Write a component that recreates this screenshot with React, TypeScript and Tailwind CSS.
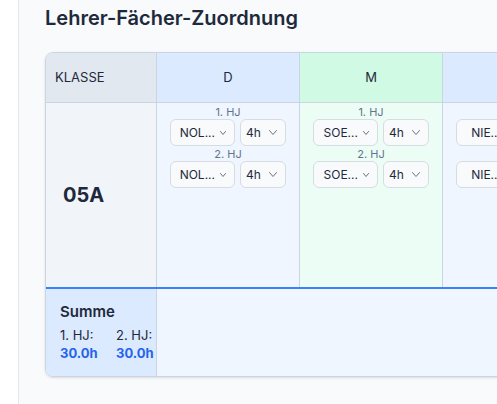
import React from "react";

function Chevron({ size }: { size: "sm" | "md" }) {
  const w = size === "sm" ? 6 : 8;
  const h = size === "sm" ? 4 : 5;
  return (
    <svg width={w} height={h} viewBox={`0 0 ${w} ${h}`} className="shrink-0">
      <path
        d={`M0.5 0.5 L${w / 2} ${h - 0.5} L${w - 0.5} 0.5`}
        fill="none"
        stroke="#6b7280"
        strokeWidth="1"
        strokeLinecap="round"
        strokeLinejoin="round"
      />
    </svg>
  );
}

function TeacherSelect({ name }: { name: string }) {
  return (
    <div className="flex h-[27px] w-[65px] items-center justify-end gap-[5px] rounded-md border border-[#d7dce3] bg-[#f8fafc] pr-[8px] text-[12px] leading-none text-[#1e293b]">
      <span>{name}</span>
      <Chevron size="sm" />
    </div>
  );
}

function HourSelect() {
  return (
    <div className="flex h-[27px] w-[46px] items-center justify-between rounded-md border border-[#d7dce3] bg-[#f8fafc] pl-[5px] pr-[8px] text-[12px] leading-none text-[#1e293b]">
      <span>4h</span>
      <Chevron size="md" />
    </div>
  );
}

function Half({ label, name }: { label: string; name: string }) {
  return (
    <div className="flex flex-col items-center">
      <div className="text-[11px] leading-[14px] text-[#64748b]">{label}</div>
      <div className="flex gap-[5px]">
        <TeacherSelect name={name} />
        <HourSelect />
      </div>
    </div>
  );
}

function SubjectCell({ name, bg }: { name: string; bg: string }) {
  return (
    <div className={`flex h-[184px] w-[143px] shrink-0 flex-col gap-[1px] border-r border-slate-300 pt-[2px] ${bg}`}>
      <Half label="1. HJ" name={name} />
      <Half label="2. HJ" name={name} />
    </div>
  );
}

export default function App() {
  const subjects = [
    { h: "D", head: "bg-[#dbeafe]", body: "bg-[#eff6ff]", t: "NOL..." },
    { h: "M", head: "bg-[#d1fae5]", body: "bg-[#ecfdf5]", t: "SOE..." },
    { h: "E", head: "bg-[#dbeafe]", body: "bg-[#eff6ff]", t: "NIE..." },
  ];
  return (
    <div className="flex h-[404px] w-[497px] overflow-hidden font-['Inter',sans-serif]">
      <div className="w-[19px] shrink-0 border-r border-[#e2e8f0] bg-white" />
      <div className="min-w-0 flex-1 bg-[#f8fafc] pl-[26px] pt-[4px]">
        <h1 className="text-[20px] font-semibold leading-7 text-[#1e293b]">
          Lehrer-Fächer-Zuordnung
        </h1>
        <div className="mt-[20px] w-max overflow-hidden rounded-l-lg border border-slate-300 shadow-sm">
          {/* header */}
          <div className="flex border-b border-slate-300">
            <div className="flex h-[49px] w-[111px] shrink-0 items-center border-r border-slate-300 bg-[#e2e8f0] pl-[9px] text-[13px] text-[#1e293b]">
              KLASSE
            </div>
            {subjects.map((s) => (
              <div
                key={s.h}
                className={`flex h-[49px] w-[143px] shrink-0 items-center justify-center border-r border-slate-300 text-[13px] font-normal text-[#1e293b] ${s.head}`}
              >
                {s.h}
              </div>
            ))}
          </div>
          {/* body */}
          <div className="flex">
            <div className="flex h-[184px] w-[111px] shrink-0 items-center border-r border-slate-300 bg-[#f1f5f9] pl-[17px] text-[20px] font-bold text-[#1e293b]">
              05A
            </div>
            {subjects.map((s) => (
              <SubjectCell key={s.h} name={s.t} bg={s.body} />
            ))}
          </div>
          {/* summe */}
          <div className="flex border-t-2 border-[#3b82f6]">
            <div className="h-[87px] w-[111px] shrink-0 border-r border-slate-300 bg-[#dbeafe] pl-[14px] pt-[13px] text-[#1e293b]">
              <div className="text-[15px] font-semibold leading-5">Summe</div>
              <div className="mt-[5px] grid grid-cols-[56px_auto] text-[13px] leading-4">
                <div>1. HJ:</div>
                <div>2. HJ:</div>
                <div className="mt-[2px] font-bold text-[#2563eb]">30.0h</div>
                <div className="mt-[2px] font-bold text-[#2563eb]">30.0h</div>
              </div>
            </div>
            <div className="h-[87px] flex-1 bg-[#eff6ff]" />
          </div>
        </div>
      </div>
    </div>
  );
}
